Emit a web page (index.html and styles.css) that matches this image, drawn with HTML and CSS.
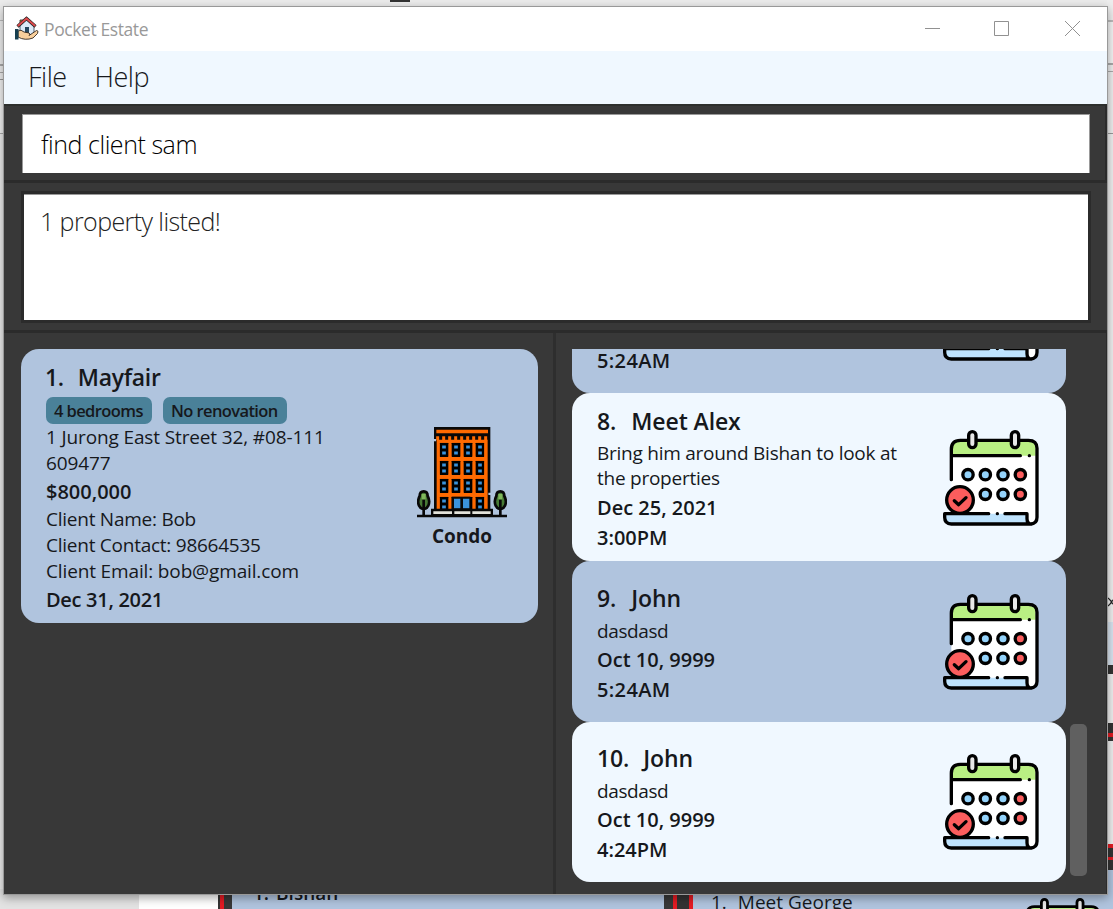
FILE: index.html
```html
<!DOCTYPE html>
<html lang="en">
<head>
<meta charset="utf-8">
<title>Pocket Estate</title>
<link rel="stylesheet" href="styles.css">
</head>
<body>
<svg class="defs" width="0" height="0" aria-hidden="true">
  <symbol id="calendar" viewBox="0 0 288 288">
    <path fill="#fff" d="M25 60Q25 31 52 31H256Q282 31 282 55V262Q282 282 262 282H100V251H25Z"/>
    <path fill="#b9ef83" d="M25 77V58Q25 31 52 31H256Q278 31 278 55V77Z"/>
    <path fill="#bfe3fd" d="M5 251H252V282H25Q5 282 5 262Z"/>
    <g fill="none" stroke="#000" stroke-width="10" stroke-linecap="round" stroke-linejoin="round">
      <path d="M25 149V58Q25 31 52 31H256Q282 31 282 55V262Q282 282 262 282H25Q5 282 5 262V251H137M186 251H252V266Q252 282 266 282"/>
      <path d="M30 77H232M259 77h.1M163 251h.1"/>
      <rect x="77" y="5" width="22" height="48" rx="11" fill="#e8e8e8"/>
      <rect x="205" y="5" width="22" height="48" rx="11" fill="#e8e8e8"/>
      <g fill="#94d3fb"><circle cx="75" cy="134" r="15.500"/><circle cx="127" cy="134" r="15.500"/><circle cx="180" cy="134" r="15.500"/><circle cx="127" cy="193" r="15.500"/><circle cx="180" cy="193" r="15.500"/></g>
      <g fill="#fb5d5d"><circle cx="232" cy="134" r="15.500"/><circle cx="232" cy="193" r="15.500"/><circle cx="51" cy="210" r="40"/></g>
      <path d="M34 212L47 224L69 203"/>
    </g>
  </symbol>
  <symbol id="floor" viewBox="0 0 134 43">
    <g fill="#000"><rect width="26" height="43" rx="2"/><rect x="36" width="26" height="43" rx="2"/><rect x="72" width="26" height="43" rx="2"/><rect x="108" width="26" height="43" rx="2"/></g>
    <path stroke="#3a93dc" stroke-width="9" stroke-dasharray="11 25" d="M7.500 13H134M7.500 31H134"/>
  </symbol>
</svg>

<div class="desktop">
  <div class="edge-mark"></div>
  <div class="left-strip"></div>
  <div class="right-strip">
    <i class="r1"></i><i class="r2"></i><i class="r3"></i><i class="r4"></i><i class="r5"></i><i class="r6"></i><i class="r7"></i><i class="r8"></i><i class="r9"></i><i class="r10"></i>
    <svg class="tiny-x" width="6" height="10" viewBox="0 0 6 10"><path d="M0 1L4 5L0 9M6 2L3 5L6 8" fill="none" stroke="#222" stroke-width="1.200"/></svg>
  </div>
  <div class="bottom-strip">
    <div class="b-gray"></div><div class="b-white"></div><div class="b-rule"></div>
    <div class="b-card b-first"><span>1.</span><span>Bishan</span></div>
    <div class="b-rule b-rule-wide"></div>
    <div class="b-card b-second"><span>1.</span><span>Meet George</span>
      <svg class="b-cal" width="80" height="80"><use href="#calendar"/></svg></div>
  </div>
</div>

<main class="window">
  <header class="titlebar">
    <svg class="app-icon" width="26" height="25" viewBox="0 0 26 25">
      <path d="M6 4h3v4H6z" fill="#e8a04c" stroke="#222" stroke-width=".8"/>
      <path d="M6 9L13 3L20 9V19H6Z" fill="#dbe9f7" stroke="#2b3b4b" stroke-width=".8"/>
      <path d="M3.500 10.500L12.500 2.500L21.500 10.500" fill="none" stroke="#222" stroke-width="3.200"/>
      <path d="M3.800 10L12.500 2.600L21.200 10" fill="none" stroke="#df4a4d" stroke-width="2"/>
      <path d="M11 11h4v7h-4z" fill="#26475e"/>
      <path d="M4 15Q7 13 10 16L15 17Q17 18 15 19.500L22.500 14.500Q25 14.500 23.500 17.500L19 22Q11 25 4 21Z" fill="#f8cf9c" stroke="#33281f" stroke-width=".9"/>
      <path d="M1 13h3.500v10.500H1z" fill="#173f50"/>
    </svg>
    <span class="app-title">Pocket Estate</span>
    <svg class="controls" width="158" height="17" viewBox="0 0 158 17" fill="none" stroke="#919191">
      <path d="M0 8.500H15M69.500 1.500h14v14h-14zM140 1L155 16M155 1L140 16"/>
    </svg>
  </header>
  <nav class="menu"><span>File</span><span>Help</span></nav>
  <section class="command"><div class="command-box"><span>find client sam</span></div></section>
  <section class="result"><div class="result-box"><span>1 property listed!</span></div></section>
  <div class="panels">
    <section class="properties">
      <article class="card property">
        <div class="info">
          <h2><span>1.</span><span>Mayfair</span></h2>
          <div class="tags"><span class="tag tag-a">4 bedrooms</span><span class="tag tag-b">No renovation</span></div>
          <p class="line l-addr">1 Jurong East Street 32, #08-111<br>609477</p>
          <p class="strong">$800,000</p>
          <p class="line">Client Name: Bob</p>
          <p class="line">Client Contact: 98664535</p>
          <p class="line l-email">Client Email: bob@gmail.com</p>
          <p class="strong s-until">Dec 31, 2021</p>
        </div>
        <figure class="kind">
          <svg width="90" height="91" viewBox="0 0 270 273">
            <path d="M51 0H220V250H51Z" fill="#080808"/>
            <path d="M58 8H213V19H58ZM59 38H212V246H59Z" fill="#ff6a00"/>
            <path d="M62 28v12M80 28v12M98 28v12M116 28v12M134 28v12M152 28v12M170 28v12M188 28v12M206 28v12" stroke="#ff6a00" stroke-width="9"/>
            <path d="M49 36h8v7h-8zM214 197h8v7h-8z" fill="#b0c4de"/>
            <use href="#floor" x="68" y="47" width="134" height="43"/>
            <use href="#floor" x="68" y="101" width="134" height="43"/>
            <use href="#floor" x="68" y="155" width="134" height="43"/>
            <use href="#floor" x="68" y="209" width="134" height="43"/>
            <path d="M104 209h56v40h-56z" fill="#080808"/>
            <path d="M111 215h19v29h-19zM138 215h19v29h-19z" fill="#3a93dc"/>
            <path d="M42 245H228V268H42Z" fill="#080808"/>
            <path d="M49 253h56v8H49zM112 253h48v8h-48zM166 253h55v8h-55z" fill="#e2e2da"/>
            <path d="M0 267H270" stroke="#080808" stroke-width="8"/>
            <g stroke="#080808" stroke-width="8">
              <path id="tree" d="M20 193Q32 193 32 207Q40 222 34 236Q29 246 20 246Q11 246 6 236Q0 222 8 207Q8 193 20 193Z" fill="#477a35"/>
              <path d="M20 218V266" />
              <use href="#tree" x="230"/>
              <path d="M250 218V266"/>
            </g>
            <path d="M14 201h12v16H14zM244 201h12v16h-12z" fill="#80b85c"/>
          </svg>
          <figcaption>Condo</figcaption>
        </figure>
      </article>
    </section>
    <section class="meetings">
      <div class="list">
        <article class="card partial"><div class="info"><p class="strong s-am">5:24AM</p></div><svg class="cal" width="96" height="96"><use href="#calendar"/></svg></article>
        <article class="card light c8">
          <div class="info"><h2><span>8.</span><span>Meet Alex</span></h2>
          <p class="line l-desc">Bring him around Bishan to look at<br>the properties</p><p class="strong">Dec 25, 2021</p><p class="strong">3:00PM</p></div>
          <svg class="cal" width="96" height="96"><use href="#calendar"/></svg>
        </article>
        <article class="card c9">
          <div class="info"><h2><span>9.</span><span>John</span></h2><p class="line l-das">dasdasd</p><p class="strong">Oct 10, 9999</p><p class="strong s-am">5:24AM</p></div>
          <svg class="cal" width="96" height="96"><use href="#calendar"/></svg>
        </article>
        <article class="card light c10">
          <div class="info"><h2><span>10.</span><span>John</span></h2><p class="line l-das">dasdasd</p><p class="strong">Oct 10, 9999</p><p class="strong">4:24PM</p></div>
          <svg class="cal" width="96" height="96"><use href="#calendar"/></svg>
        </article>
      </div>
      <div class="scrollbar"></div>
    </section>
  </div>
</main>
</body>
</html>
```
FILE: styles.css
```css
* { box-sizing: border-box; }
body { margin: 0; width: 1113px; height: 909px; overflow: hidden; position: relative; font-family: "Open Sans", "Noto Sans", sans-serif; color: #16181c; background: #e9e9e9; }
h2, p, figure { margin: 0; }
.defs { position: absolute; }

/* Content behind the application window */
.desktop { position: absolute; inset: 0; overflow: hidden; background: #ececec; }
.edge-mark { position: absolute; left: 390px; top: 0; width: 20px; height: 2px; background: #333; }
.left-strip { position: absolute; left: 0; top: 20px; width: 4px; height: 114px; border-top: 1px solid #bbb; border-bottom: 1px solid #aaa; background: linear-gradient(#eee 43px, #aaa 43px 45px, #eee 45px 51px, #aaa 51px 52px, #eee 52px 58px, #999 58px 59px, #f2f2f2 59px); }
.right-strip { position: absolute; left: 1107px; top: 0; width: 6px; height: 909px; display: flex; flex-direction: column; background: #f0f0f0; }
.right-strip i { display: block; flex: none; }
.r1 { height: 134px; background: linear-gradient(#eee 20px, #bbb 20px 22px, #f4f4f4 22px 63px, #aaa 63px 65px, #eee 65px 71px, #aaa 71px 72px, #eee 72px 133px, #999 133px); }
.r2 { height: 488px; }
.r3 { height: 43px; background: #d9e5f1; }
.r4 { height: 9px; background: #333; }
.r5 { height: 49px; }
.r6 { height: 18px; background: linear-gradient(#333 10px, #e41b23 10px 14px, #333 14px); }
.r7 { height: 103px; }
.r8 { height: 4px; background: #e41b23; }
.r9 { height: 22px; background: linear-gradient(#333 9px, #e41b23 9px 12px, #333 12px); }
.r10 { height: 39px; background: #b0c4de; }
.tiny-x { position: absolute; left: 1px; top: 597px; }
.bottom-strip { position: absolute; left: 0; right: 0; top: 889px; height: 20px; display: flex; overflow: hidden; }
.b-gray { width: 139px; background: #e3e3e3; }
.b-white { width: 79px; background: #fff; }
.b-rule { width: 14px; background: linear-gradient(90deg, #333 2px, #e41b23 2px 6px, #383838 6px); }
.b-rule-wide { width: 29px; background: linear-gradient(90deg, #383838 9px, #e41b23 9px 13px, #333 13px 25px, #e41b23 25px); }
.b-card { position: relative; display: flex; background: #b0c4de; font-size: 19px; font-weight: 500; line-height: 26px; }
.b-first { width: 432px; height: 29px; padding-left: 21px; gap: 7px; font-weight: 600; margin-top: -9px; }
.b-second { flex: 1; padding-left: 18px; gap: 11px; letter-spacing: 0; }
.b-cal { position: absolute; left: 327px; top: 9px; }

/* Application window */
.window { position: absolute; left: 3px; top: 6px; width: 1105px; height: 889px; display: flex; flex-direction: column; border: 1px solid #999; background: #383838; box-shadow: 0 3px 9px rgba(0,0,0,.35); }
.titlebar { height: 44px; flex: none; display: flex; align-items: center; padding-left: 10px; background: #fff; color: #999; }
.app-icon { margin-top: -2px; }
.app-title { flex: 1; margin-left: 4px; font-size: 17.500px; letter-spacing: -.4px; }
.controls { margin-right: 24px; margin-bottom: 2px; }
.menu { height: 53px; flex: none; display: flex; gap: 28px; padding-left: 24px; background: #f0f8ff; font-size: 27px; font-weight: 300; line-height: 52px; letter-spacing: -.5px; color: #16181c; }
.command { height: 79px; flex: none; padding: 8px 15px 0 18px; border-top: 2px solid #2d2f2d; border-bottom: 3px solid #2b2b2b; border-right: 2px solid #2b2b2b; }
.command-box { height: 59px; border: 1px solid #999; border-bottom: 0; background: #fff; padding-left: 18px; font-size: 25px; font-weight: 300; line-height: 58px; letter-spacing: -.45px; color: #000; }
.result { height: 150px; flex: none; padding: 8px 16px 0 17px; border-bottom: 3px solid #2b2b2b; }
.result-box { height: 132px; border: 3px solid #2b2b2b; background: #fff; padding: 9px 0 0 16px; font-size: 25px; font-weight: 300; line-height: 36px; letter-spacing: -.58px; color: #222; box-shadow: inset 0 1px #999; }
.panels { flex: 1; display: flex; min-height: 0; }
.properties { width: 552px; padding: 16px 15px 0 17px; border-right: 3px solid #2e2e2e; }
.card { display: flex; border-radius: 18px; background: #b0c4de; }
.light { background: #f0f8ff; }
.property { height: 274px; width: 517px; padding: 12px 31px 0 25px; justify-content: space-between; }
h2 { display: flex; height: 32px; gap: 15px; font-size: 23px; font-weight: 600; line-height: 32px; letter-spacing: -.1px; }
.property h2 { gap: 14px; margin-left: -1px; letter-spacing: -.3px; }
.line { font-size: 19px; line-height: 26px; letter-spacing: -.25px; }
.l-addr { letter-spacing: -.13px; }
.l-email { letter-spacing: -.14px; }
.strong { height: 30px; padding-top: 1px; font-size: 20px; font-weight: 600; line-height: 29px; white-space: nowrap; }
.s-until { letter-spacing: -.3px; }
.s-am { letter-spacing: .35px; }
.tags { display: flex; gap: 11px; height: 27px; margin-top: 4px; }
.tag { height: 27px; border-radius: 7px; background: #4a8199; padding-left: 8px; font-size: 16.500px; font-weight: 600; line-height: 27px; letter-spacing: -.6px; white-space: nowrap; }
.tag-a { width: 106px; }
.tag-b { width: 124px; }
.kind { width: 90px; padding-top: 66px; text-align: center; }
.kind svg { display: block; }
figcaption { font-size: 19px; font-weight: 700; line-height: 36px; letter-spacing: 0; }
.meetings { flex: 1; display: flex; gap: 4px; padding: 16px 0 0 16px; border-right: 1px solid #2b2b2b; }
.list { width: 494px; height: 533px; overflow: hidden; }
.list .card { justify-content: space-between; padding: 0 27px 0 25px; }
.list .card .line { margin-top: 4px; line-height: 26px; }
.list .card .l-desc { height: 51px; line-height: 25px; }
.list .card .l-das { letter-spacing: -.4px; }
.list .partial { height: 44px; border-radius: 0 0 18px 18px; overflow: hidden; }
.list .partial .strong { margin-top: -4px; }
.list .partial .cal { margin-top: -84px; }
.cal { flex: none; }
.list .c8 { height: 168px; padding-top: 12px; }
.list .c9 { height: 161px; padding-top: 21px; }
.list .c10 { height: 160px; padding-top: 20px; }
.c10 h2 { gap: 14px; }
.c8 .cal { margin-top: 25px; }
.c9 .cal, .c10 .cal { margin-top: 12px; }
.scrollbar { width: 17px; height: 152px; margin-top: 375px; border-radius: 5px; background: #606060; }
```
